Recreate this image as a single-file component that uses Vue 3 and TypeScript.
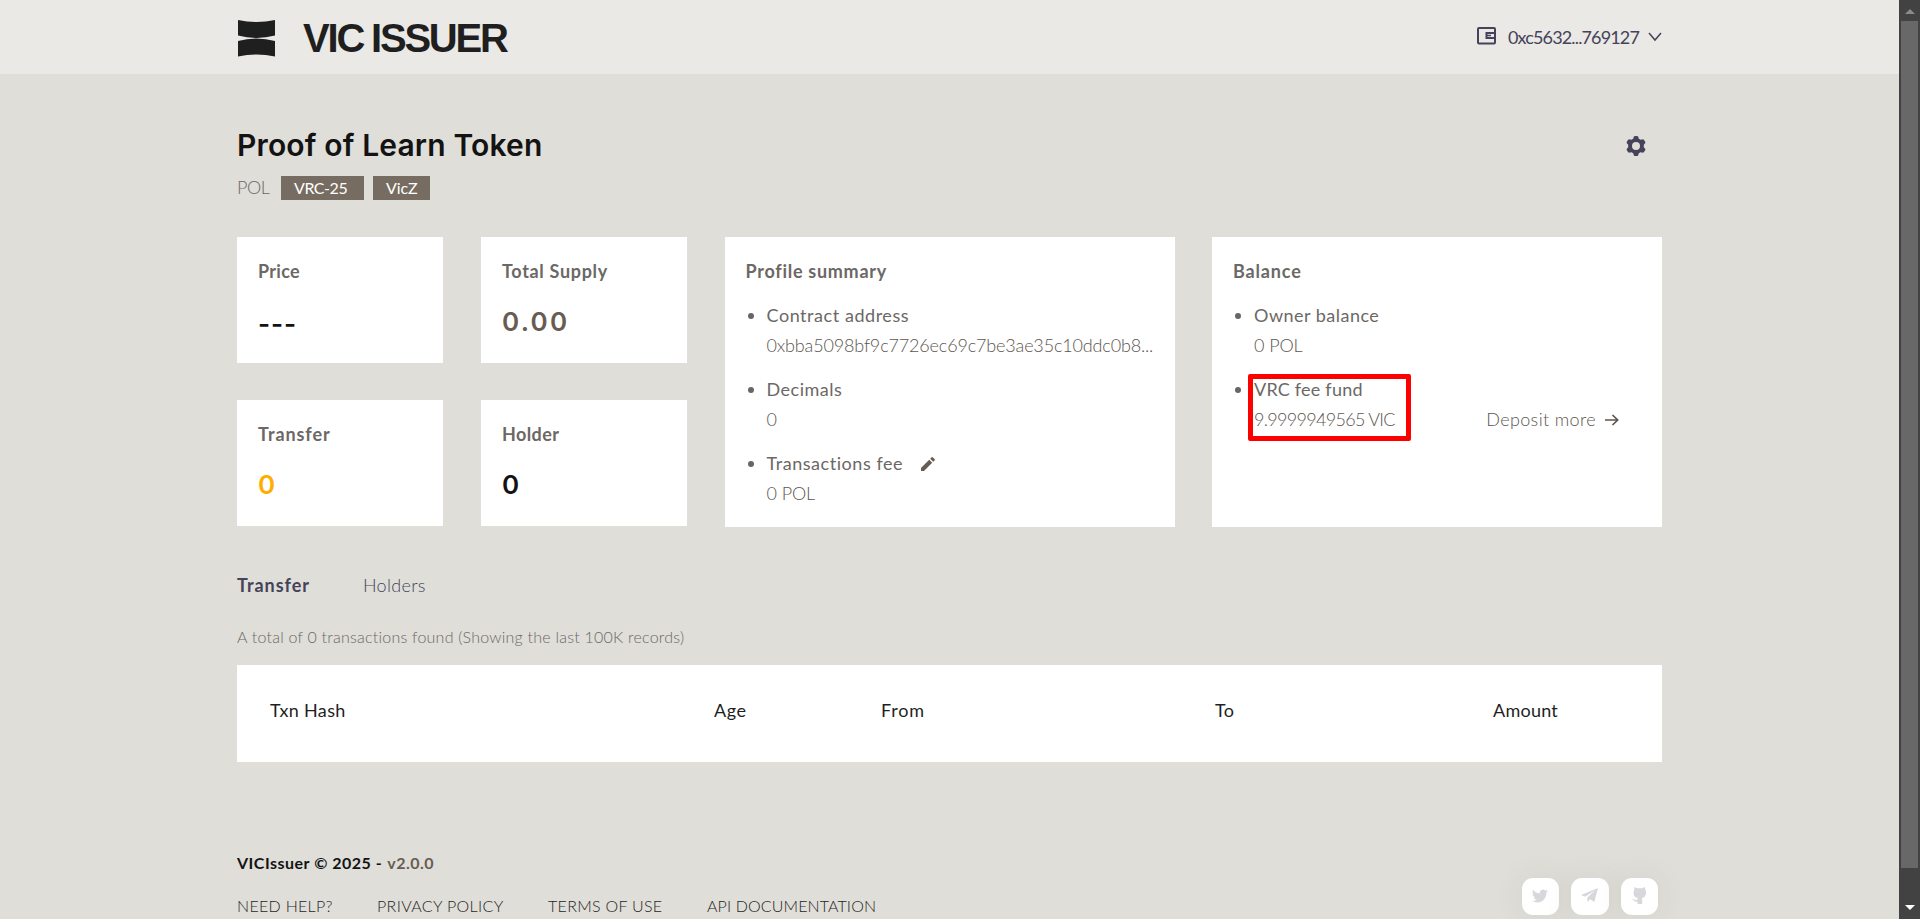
<script setup lang="ts">
interface Txt {
  text: string
  track: number
}

interface Stat {
  label: Txt
  value: string
  tone: string
}

interface Detail {
  label: Txt
  value: Txt
  editable?: boolean
  action?: Txt
}

const spacing = (t: Txt) => ({ letterSpacing: `${t.track}px` })

const wallet: Txt = { text: '0xc5632...769127', track: -0.86 }

const stats: Stat[] = [
  { label: { text: 'Price', track: 0.3 }, value: '---', tone: 'dark dashes' },
  { label: { text: 'Total Supply', track: 0.68 }, value: '0.00', tone: 'brown' },
  { label: { text: 'Transfer', track: 0.9 }, value: '0', tone: 'amber' },
  { label: { text: 'Holder', track: 0.4 }, value: '0', tone: 'dark' },
]

const profile: Detail[] = [
  {
    label: { text: 'Contract address', track: 0.55 },
    value: { text: '0xbba5098bf9c7726ec69c7be3ae35c10ddc0b8...', track: -0.16 },
  },
  { label: { text: 'Decimals', track: 0.5 }, value: { text: '0', track: 0 } },
  {
    label: { text: 'Transactions fee', track: 0.55 },
    value: { text: '0 POL', track: -0.1 },
    editable: true,
  },
]

const balance: Detail[] = [
  { label: { text: 'Owner balance', track: 0.48 }, value: { text: '0 POL', track: -0.1 } },
  {
    label: { text: 'VRC fee fund', track: 0.22 },
    value: { text: '9.9999949565 VIC', track: -0.7 },
    action: { text: 'Deposit more', track: 0.36 },
  },
]

const columns: Txt[] = [
  { text: 'Txn Hash', track: 0.35 },
  { text: 'Age', track: 0.5 },
  { text: 'From', track: 0.8 },
  { text: 'To', track: 0.4 },
  { text: 'Amount', track: 0.25 },
]

const links: Txt[] = [
  { text: 'NEED HELP?', track: 0.3 },
  { text: 'PRIVACY POLICY', track: 0.35 },
  { text: 'TERMS OF USE', track: 0.3 },
  { text: 'API DOCUMENTATION', track: 0.12 },
]
</script>

<template>
  <div class="screen">
    <div class="page">
      <header class="topbar">
        <div class="brand">
          <svg class="mark" width="37" height="37" viewBox="0 0 37 37">
            <path d="M0 0Q18.500 4 37 0V15.500Q28 17.800 18.500 18Q9 17.800 0 15.500Z" />
            <path d="M0 21Q9 18.700 18.500 18.500Q28 18.700 37 21V36.500Q18.500 32.500 0 36.500Z" />
          </svg>
          <span class="wordmark">VIC ISSUER</span>
        </div>
        <div class="wallet">
          <svg class="wallet-icon" width="20" height="18" viewBox="0 0 20 18">
            <rect x="1" y="1" width="17" height="15.500" rx="1" fill="none" stroke="currentColor" stroke-width="2" />
            <path d="M18 6H9.500V11H18" fill="none" stroke="currentColor" stroke-width="2" />
            <path d="M9 8.500H14" stroke="currentColor" stroke-width="1.500" />
          </svg>
          <span class="wallet-address" :style="spacing(wallet)">{{ wallet.text }}</span>
          <svg width="14" height="10" viewBox="0 0 14 10">
            <path d="M1 1L7 8L13 1" fill="none" stroke="currentColor" stroke-width="1.500" />
          </svg>
        </div>
      </header>

      <main class="content">
        <div class="title-row">
          <h1>Proof of Learn Token</h1>
          <svg class="gear" width="20" height="20" viewBox="0 0 20 20">
            <path
              fill-rule="evenodd"
              d="M8 .3Q10 -.3 12 .3L12.800 2.700L14.600 3.700L17.200 3.200Q18.900 4.600 19.500 6.700L17.800 8.700V11.300L19.500 13.300Q18.900 15.400 17.200 16.800L14.600 16.300L12.800 17.300L12 19.700Q10 20.300 8 19.700L7.200 17.300L5.400 16.300L2.800 16.800Q1.100 15.400 .5 13.300L2.200 11.300V8.700L.5 6.700Q1.100 4.600 2.800 3.200L5.400 3.700L7.200 2.700ZM10 6A4 4 0 1 0 10 14A4 4 0 1 0 10 6Z"
            />
          </svg>
        </div>
        <div class="meta">
          <span class="symbol">POL</span>
          <span class="tag tag-standard">VRC-25</span>
          <span class="tag tag-network">VicZ</span>
        </div>

        <section class="overview">
          <div class="stats">
            <article v-for="s in stats" :key="s.label.text" class="card stat">
              <h2 :style="spacing(s.label)">{{ s.label.text }}</h2>
              <p class="figure" :class="s.tone">{{ s.value }}</p>
            </article>
          </div>

          <article class="card panel">
            <h2 class="profile-heading">Profile summary</h2>
            <ul>
              <li v-for="d in profile" :key="d.label.text">
                <div class="line label">
                  <span :style="spacing(d.label)">{{ d.label.text }}</span>
                  <svg v-if="d.editable" class="pencil" width="14" height="14" viewBox="0 0 14 14">
                    <path d="M0 11L8.200 2.800L11.200 5.800L3 14H0ZM9.200 1.800L10.700 .3Q11.200 -.1 11.700 .3L13.700 2.300Q14.100 2.800 13.700 3.300L12.200 4.800Z" />
                  </svg>
                </div>
                <div class="line value" :style="spacing(d.value)">{{ d.value.text }}</div>
              </li>
            </ul>
          </article>

          <article class="card panel">
            <h2 class="balance-heading">Balance</h2>
            <ul>
              <li v-for="d in balance" :key="d.label.text">
                <div class="line label">
                  <span :style="spacing(d.label)">{{ d.label.text }}</span>
                </div>
                <div class="line value">
                  <span :style="spacing(d.value)">{{ d.value.text }}</span>
                  <a v-if="d.action" class="deposit">
                    <span :style="spacing(d.action)">{{ d.action.text }}</span>
                    <svg class="arrow" width="14" height="12" viewBox="0 0 14 12">
                      <path d="M0 6H12.500M7.500 1L12.700 6L7.500 11" fill="none" stroke="currentColor" stroke-width="1.700" />
                    </svg>
                  </a>
                </div>
              </li>
            </ul>
            <div class="highlight"></div>
          </article>
        </section>

        <nav class="tabs">
          <a class="active">Transfer</a>
          <a class="inactive">Holders</a>
        </nav>
        <p class="note">A total of 0 transactions found (Showing the last 100K records)</p>
        <div class="table-head">
          <span v-for="c in columns" :key="c.text" :style="spacing(c)">{{ c.text }}</span>
        </div>
      </main>

      <footer class="footer">
        <div>
          <p class="copyright">
            <span class="owner">VICIssuer © 2025 -</span>
            <span class="version">v2.0.0</span>
          </p>
          <nav class="links">
            <a v-for="l in links" :key="l.text" :style="spacing(l)">{{ l.text }}</a>
          </nav>
        </div>
        <div class="social">
          <a class="tile">
            <svg width="16" height="16" viewBox="0 0 24 24">
              <path d="M23.950 4.570a10 10 0 0 1-2.820.780 4.960 4.960 0 0 0 2.160-2.720c-.950.550-2 .960-3.130 1.180a4.920 4.920 0 0 0-8.380 4.480C7.690 8.090 4.070 6.130 1.640 3.160a4.920 4.920 0 0 0 1.520 6.570 4.900 4.900 0 0 1-2.230-.610v.060a4.920 4.920 0 0 0 3.950 4.830 5 5 0 0 1-2.210.080 4.940 4.940 0 0 0 4.600 3.420A9.870 9.870 0 0 1 0 19.540a14 14 0 0 0 7.550 2.210c9.050 0 14-7.500 14-13.980 0-.210 0-.420-.020-.630a9.940 9.940 0 0 0 2.420-2.570z" />
            </svg>
          </a>
          <a class="tile">
            <svg width="17" height="15" viewBox="0 0 17 15">
              <path d="M17 0L0 7L4.200 8.800L14 2.200L6.200 9.700L6.500 14L9 11.200L13.300 14Z" />
            </svg>
          </a>
          <a class="tile">
            <svg width="14" height="17" viewBox="0 0 14 17">
              <path d="M2.500 0L5.200 1.200H10.200L13 0L13.400 3.200Q14.300 4.700 13.900 6.900Q13.300 10.200 10.200 10.800V17H5.500V14.500Q2.800 15 1.700 13.500L0 12L2 12.200Q3.500 13.600 5.500 12.800V10.800Q2 10.200 1.600 6.900Q1.300 4.700 2.200 3.200Z" />
            </svg>
          </a>
        </div>
      </footer>
    </div>

    <div class="scrollbar">
      <svg class="arrow-up" width="10" height="5" viewBox="0 0 10 5"><path d="M0 5L5 0L10 5Z" /></svg>
      <div class="thumb"></div>
      <svg class="arrow-down" width="10" height="5" viewBox="0 0 10 5"><path d="M0 0H10L5 5Z" /></svg>
    </div>
  </div>
</template>

<style>
html,
body {
  margin: 0;
  overflow: hidden;
}
</style>

<style scoped>
* {
  box-sizing: border-box;
}
h1,
h2,
p,
ul {
  margin: 0;
  padding: 0;
}
svg {
  display: block;
  fill: currentColor;
  flex: none;
}
.screen {
  display: flex;
  width: 1920px;
  height: 919px;
  overflow: hidden;
  font-family: Lato, 'Open Sans', sans-serif;
  font-size: 18px;
  color: #6b6865;
}
.page {
  width: 1899px;
  background: #dfded9;
}
.topbar {
  display: flex;
  justify-content: space-between;
  height: 74px;
  padding: 0 237px 0 238px;
  background: #eae9e5;
}
.brand {
  display: flex;
  color: #1f1f1f;
}
.mark {
  margin: 20px 28px 0 0;
}
.wordmark {
  font: 700 40px/74px 'Liberation Sans', Arial, sans-serif;
  letter-spacing: -2.2px;
  white-space: nowrap;
  word-spacing: -1px;
  padding-top: 1px;
}
.wallet {
  display: flex;
  align-items: center;
  color: #45435a;
}
.wallet-icon {
  margin: 0 11px 2px 0;
}
.wallet-address {
  margin-right: 9px;
}
.content {
  width: 1425px;
  margin-left: 237px;
  padding-top: 51px;
}
.title-row {
  display: flex;
  align-items: center;
  justify-content: space-between;
  height: 40px;
}
h1 {
  font: 600 30px/40px Inter, sans-serif;
  letter-spacing: 0.15px;
  color: #131313;
}
.gear {
  margin-right: 16px;
  margin-top: 1px;
  color: #45435a;
}
.meta {
  display: flex;
  height: 24px;
  margin-top: 11px;
  line-height: 23px;
}
.symbol {
  width: 44px;
  font-weight: 300;
  letter-spacing: -0.5px;
}
.tag {
  padding-left: 13px;
  background: #776c61;
  color: #fff;
  font-size: 16px;
  line-height: 24px;
}
.tag-standard {
  width: 83px;
  margin-right: 9px;
  letter-spacing: -0.45px;
}
.tag-network {
  width: 57px;
  letter-spacing: -0.1px;
}
.overview {
  display: grid;
  grid-template-columns: 450px 450px 450px;
  justify-content: space-between;
  align-items: start;
  margin-top: 37px;
}
.stats {
  display: grid;
  grid-template-columns: 206px 206px;
  justify-content: space-between;
  row-gap: 37px;
}
.card {
  position: relative;
  background: #fff;
}
.stat {
  height: 126px;
  padding: 22px 21px;
}
.panel {
  height: 290px;
  padding: 22px 21px;
}
h2 {
  font-size: 18px;
  font-weight: 700;
  line-height: 25px;
  color: #6b6865;
}
.profile-heading {
  letter-spacing: 0.72px;
}
.balance-heading {
  letter-spacing: 0.85px;
}
.figure {
  margin-top: 22px;
  font: 600 26px/31px Inter, sans-serif;
  letter-spacing: 2.3px;
}
.dashes {
  padding-top: 2px;
  letter-spacing: 0.9px;
}
.dark {
  color: #131313;
}
.brown {
  color: #675c52;
}
.amber {
  color: #ffae00;
}
ul {
  margin-top: 16px;
  list-style: none;
}
li {
  margin-bottom: 14px;
  padding-left: 21px;
}
.line {
  display: flex;
  align-items: center;
  height: 30px;
  white-space: nowrap;
}
.label::before {
  content: '';
  width: 6px;
  height: 6px;
  margin: 2px 13px 0 -19px;
  border-radius: 50%;
  background: #666;
}
.value {
  justify-content: space-between;
  font-weight: 300;
  color: #5d564f;
}
.pencil {
  margin: 2px 0 0 18px;
  color: #675c52;
}
.deposit {
  display: flex;
  align-items: center;
  gap: 9px;
  margin-right: 22px;
}
.arrow {
  margin-top: 2px;
}
.highlight {
  position: absolute;
  left: 35.500px;
  top: 137px;
  width: 163px;
  height: 67px;
  border: 5px solid #f00;
  border-radius: 2px;
}
.tabs {
  display: flex;
  margin-top: 43px;
  line-height: 30px;
  color: #45435a;
}
.active {
  width: 126px;
  font-weight: 700;
  letter-spacing: 0.95px;
}
.inactive {
  font-weight: 300;
  letter-spacing: 0.3px;
}
.note {
  margin-top: 25px;
  font-size: 16px;
  font-weight: 300;
  line-height: 24px;
  letter-spacing: 0.23px;
}
.table-head {
  display: grid;
  grid-template-columns: 444px 167px 334px 278px 1fr;
  height: 97px;
  margin-top: 16px;
  padding-left: 33px;
  background: #fff;
  line-height: 90px;
  color: #1f1f1f;
}
.footer {
  display: flex;
  justify-content: space-between;
  width: 1425px;
  margin: 89px 0 0 237px;
  font-size: 16px;
}
.copyright {
  display: flex;
  gap: 5px;
  font-weight: 700;
  line-height: 24px;
}
.owner {
  color: #131313;
  letter-spacing: 0.5px;
}
.version {
  color: #675c52;
  letter-spacing: 0.5px;
}
.links {
  display: grid;
  grid-template-columns: 140px 171px 159px 180px;
  margin-top: 18px;
  font-weight: 300;
  line-height: 25px;
  color: #1f1f1f;
}
.social {
  display: flex;
  gap: 12px;
  margin: 27px 4px 0 0;
}
.tile {
  display: flex;
  align-items: center;
  justify-content: center;
  width: 37.500px;
  height: 37px;
  border-radius: 11px;
  background: #fff;
  color: #d8d8dc;
  box-shadow: 0 0 32px rgba(60, 60, 40, 0.08);
}
.tile svg {
  margin-bottom: 2px;
}
.scrollbar {
  display: flex;
  flex-direction: column;
  align-items: center;
  width: 21px;
  background: #424242;
}
.arrow-up {
  margin-top: 9px;
  color: #8a8a8a;
}
.thumb {
  width: 17px;
  height: 847px;
  margin-top: 7px;
  background: #686868;
}
.arrow-down {
  margin-top: 37px;
  color: #fff;
}
</style>
